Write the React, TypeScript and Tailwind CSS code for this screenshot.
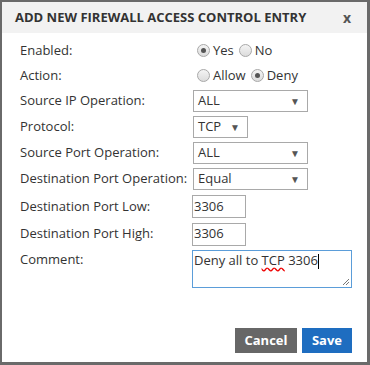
import React from 'react';

const font = { fontFamily: '"Open Sans", "Liberation Sans", sans-serif' };

function Radio({ checked, label }: { checked?: boolean; label: string }) {
  return (
    <span className="flex items-center gap-[3px] mr-[5px]">
      <span className="w-[13px] h-[13px] rounded-full border border-[#a8a8a8] bg-gradient-to-b from-[#f4f4f4] to-[#dcdcdc] flex items-center justify-center">
        {checked && <span className="w-[5px] h-[5px] rounded-full bg-[#555]" />}
      </span>
      <span>{label}</span>
    </span>
  );
}

function Select({ value, width }: { value: string; width: string }) {
  return (
    <div className={`${width} h-[22px] border border-[#a9a9a9] bg-white flex items-center justify-between pl-[4px] pr-[7px]`}>
      <span>{value}</span>
      <span className="text-[10px] text-[#555]">▼</span>
    </div>
  );
}

function Input({ value }: { value: string }) {
  return (
    <div className="w-[54px] h-[23px] border border-[#a9a9a9] bg-white flex items-center pl-[1px]">{value}</div>
  );
}

const rows: { label: string; control: React.ReactNode; h: string }[] = [
  { label: 'Enabled:', control: <div className="flex pl-[4px]"><Radio checked label="Yes" /><Radio label="No" /></div>, h: 'h-[25px]' },
  { label: 'Action:', control: <div className="flex pl-[4px]"><Radio label="Allow" /><Radio checked label="Deny" /></div>, h: 'h-[25px]' },
  { label: 'Source IP Operation:', control: <Select value="ALL" width="w-[115px]" />, h: 'h-[26px]' },
  { label: 'Protocol:', control: <Select value="TCP" width="w-[55px]" />, h: 'h-[26px]' },
  { label: 'Source Port Operation:', control: <Select value="ALL" width="w-[115px]" />, h: 'h-[26px]' },
  { label: 'Destination Port Operation:', control: <Select value="Equal" width="w-[115px]" />, h: 'h-[26px]' },
];

export default function App() {
  return (
    <div style={font} className="w-[370px] h-[365px] border-l-2 border-t-2 border-r-[3px] border-b-[3px] border-[#6a6a6a] bg-white text-[13px] text-[#333] flex flex-col">
      <div className="h-[31px] bg-[#f2f2f2] flex items-center justify-between pl-[13px] pr-[16px] shrink-0">
        <span className="font-bold text-[13px] text-[#333]">ADD NEW FIREWALL ACCESS CONTROL ENTRY</span>
        <span className="font-bold text-[14px] text-[#555]">x</span>
      </div>
      <div className="flex flex-col pl-[18px] pt-[5px]">
        {rows.map((r) => (
          <div key={r.label} className={`flex items-center ${r.h}`}>
            <span className="w-[173px] shrink-0">{r.label}</span>
            {r.control}
          </div>
        ))}
        <div className="flex items-center h-[27px] mt-[1px]">
          <span className="w-[172px] shrink-0">Destination Port Low:</span>
          <Input value="3306" />
        </div>
        <div className="flex items-center h-[28px]">
          <span className="w-[172px] shrink-0">Destination Port High:</span>
          <Input value="3306" />
        </div>
        <div className="flex items-start mt-[2px]">
          <span className="w-[172px] shrink-0">Comment:</span>
          <div className="relative w-[160px] h-[38px] border border-[#5b9dd9] bg-white pl-[1px]">
            <span>Deny all to </span>
            <span className="underline decoration-wavy decoration-[#e00] underline-offset-2">TCP</span>
            <span> 3306</span>
            <span className="inline-block w-px h-[15px] bg-black align-middle" />
            <svg className="absolute right-[1px] bottom-[1px]" width="8" height="8" viewBox="0 0 8 8">
              <path d="M7 1L1 7M7 4L4 7" stroke="#777" strokeWidth="1" />
            </svg>
          </div>
        </div>
      </div>
      <div className="flex justify-end gap-[5px] pr-[15px] mt-auto mb-[9px]">
        <button className="w-[62px] h-[25px] bg-[#676767] text-white font-bold text-[13px]">Cancel</button>
        <button className="w-[50px] h-[25px] bg-[#1e6dc0] text-white font-bold text-[13px]">Save</button>
      </div>
    </div>
  );
}
